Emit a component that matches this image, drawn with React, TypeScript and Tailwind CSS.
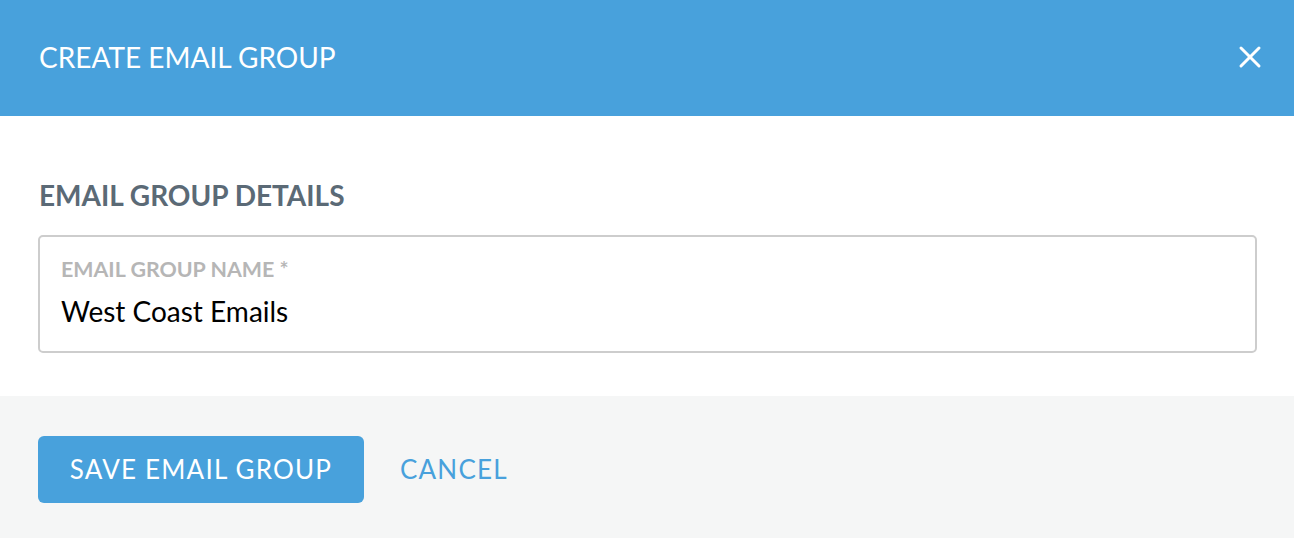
import { X } from 'lucide-react'

export default function App() {
  return (
    <div className="w-[1294px] h-[538px] bg-white flex flex-col font-['Lato','Open_Sans',sans-serif]">
      <div className="h-[116px] bg-[#48a1dc] flex items-center justify-between pl-[39px] pr-[26px]">
        <h1 className="text-white text-[28px] -mt-[3px]">CREATE EMAIL GROUP</h1>
        <button className="text-white -mt-[2px]">
          <X size={36} strokeWidth={2} />
        </button>
      </div>

      <div className="flex-1 pl-[38px] pr-[37px] pt-[65px]">
        <h2 className="text-[#5b6a76] text-[28px] font-bold leading-none ml-[1px]">EMAIL GROUP DETAILS</h2>
        <div className="mt-[26px] h-[118px] border-2 border-[#cdcdcd] rounded-[5px] px-[21px] pt-[22px]">
          <div className="text-[#b6b6b6] text-[21.4px] font-bold leading-none">EMAIL GROUP NAME *</div>
          <div className="text-black text-[28px] leading-none mt-[17px]">West Coast Emails</div>
        </div>
      </div>

      <div className="h-[142px] bg-[#f5f6f6] flex items-start gap-[36px] px-[38px] pt-[40px]">
        <button className="h-[67px] w-[326px] rounded-[6px] bg-[#48a1dc] text-white text-[26px] tracking-[1.2px]">
          SAVE EMAIL GROUP
        </button>
        <button className="h-[67px] text-[#48a1dc] text-[26px] tracking-[1.2px]">CANCEL</button>
      </div>
    </div>
  )
}
